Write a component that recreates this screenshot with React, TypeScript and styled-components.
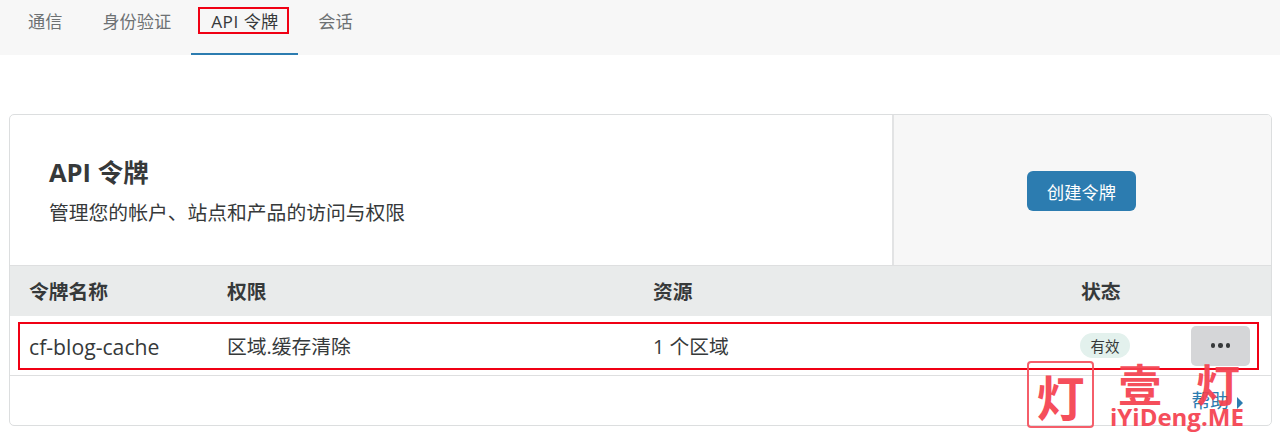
import React from "react";
import styled, { createGlobalStyle } from "styled-components";

const Global = createGlobalStyle`
  html, body { margin: 0; padding: 0; background: #fff; }
  body {
    width: 1280px; height: 433px; overflow: hidden; position: relative;
    font-family: "Open Sans", "Noto Sans CJK SC", sans-serif;
    color: #36393a;
  }
`;

const Nav = styled.nav`
  display: flex; height: 55px; padding-left: 8px; background: #f7f7f7; box-sizing: border-box;
`;
const Tab = styled.div<{ $active?: boolean }>`
  position: relative; display: flex; align-items: flex-start; padding: 11px 20px 0;
  box-sizing: border-box; height: 55px; line-height: 21px; font-size: 17.2px; white-space: pre;
  color: ${(p) => (p.$active ? "#36393a" : "#6d7173")};
  border-bottom: 2px solid ${(p) => (p.$active ? "#2c7cb0" : "transparent")};
`;
const Latin = styled.span`
  letter-spacing: .55px;
`;
const TabMark = styled.span`
  position: absolute; left: 7px; top: 7px; width: 91px; height: 27px;
  border: 2px solid #f00014; box-sizing: border-box;
`;
const Card = styled.section`
  margin: 59px 8px 0 9px; height: 312px; box-sizing: border-box;
  border: 1px solid #dcdedf; border-radius: 5px; overflow: hidden;
  display: flex; flex-direction: column;
`;
const Head = styled.header`
  display: flex; height: 150px; flex: none; border-bottom: 1px solid #dedfe0;
`;
const Intro = styled.div`
  width: 884px; flex: none; box-sizing: border-box; border-right: 2px solid #e2e3e4;
  padding: 39px 0 0 39px;
`;
const Title = styled.h2`
  margin: 0; font-size: 25.5px; font-weight: 700; line-height: 36px; color: #36393a;
`;
const Sub = styled.p`
  margin: 8px 0 0; font-size: 19.8px; line-height: 30px; color: #36393a;
`;
const Aside = styled.div`
  flex: 1; background: #f7f7f7; display: flex; align-items: center; justify-content: center;
  padding: 2px 2px 0 0;
`;
const Create = styled.button`
  width: 109px; height: 40px; border: 0; border-radius: 6px; background: #2c7cb0; color: #fff;
  font: 17.2px "Open Sans", "Noto Sans CJK SC", sans-serif; padding: 0;
`;
const Row = styled.div<{ $head?: boolean }>`
  display: grid; grid-template-columns: 198px 426px 428px 1fr; align-items: center;
  box-sizing: border-box; padding-left: 19px; flex: none;
  height: ${(p) => (p.$head ? "50px" : "60px")};
  padding-bottom: ${(p) => (p.$head ? "2px" : "0")};
  background: ${(p) => (p.$head ? "#e9ebeb" : "#fff")};
  font-size: 19.8px; font-weight: ${(p) => (p.$head ? 700 : 400)};
  border-bottom: ${(p) => (p.$head ? "0" : "1px solid #dedfe0")};
  position: relative;
`;
const TokenName = styled.span`
  font-size: 21.2px; padding-top: 2px;
`;
const Status = styled.div`
  display: flex; align-items: center; justify-content: space-between; padding-right: 21px; margin-left: -1px;
`;
const Badge = styled.span`
  width: 50px; height: 25px; border-radius: 13px; background: #e3f1ed;
  display: flex; align-items: center; justify-content: center; font-size: 14.5px; color: #36393a;
`;
const More = styled.button`
  width: 59px; height: 40px; border: 0; border-radius: 5px; background: #d5d6d8; padding: 0;
  display: flex; align-items: center; justify-content: center; gap: 3px;
`;
const Dot = styled.i`
  width: 4.5px; height: 4.5px; border-radius: 50%; background: #36393a;
`;
const RowMark = styled.span`
  position: absolute; left: 8px; top: 6px; width: 1241px; height: 48px;
  border: 2px solid #f00014; box-sizing: border-box; pointer-events: none;
`;
const Foot = styled.div`
  flex: 1; display: flex; justify-content: flex-end; align-items: flex-start;
  padding: 14px 28px 0 0; color: #2c7cb0; font-size: 18.8px; line-height: 22px; gap: 8px;
`;
const Arrow = styled.svg`
  width: 6px; height: 12px; margin-top: 7px;
`;
const Water = styled.div`
  position: absolute; left: 1027px; top: 361px; display: flex; gap: 16px; color: #f5414f; opacity: .93;
`;
const Stamp = styled.div`
  width: 67px; height: 67px; box-sizing: border-box; border: 2px solid #f5525f; border-radius: 4px;
  display: flex; align-items: center; justify-content: center;
  font: 700 48px/1 "Noto Sans CJK SC", sans-serif;
`;
const Brand = styled.div`
  display: flex; flex-direction: column; align-items: stretch; width: 136px;
`;
const Glyphs = styled.div`
  display: flex; justify-content: space-between; padding: 0 6px 0 8px;
  font: 700 44px/44px "Noto Sans CJK SC", sans-serif;
`;
const Domain = styled.div`
  font: 700 24px/24px "Open Sans", sans-serif; white-space: nowrap;
`;

export default function App() {
  return (
    <>
      <Global />
      <Nav>
        <Tab>通信</Tab>
        <Tab>身份验证</Tab>
        <Tab $active><Latin>API </Latin>令牌<TabMark /></Tab>
        <Tab>会话</Tab>
      </Nav>
      <Card>
        <Head>
          <Intro>
            <Title>API 令牌</Title>
            <Sub>管理您的帐户、站点和产品的访问与权限</Sub>
          </Intro>
          <Aside><Create>创建令牌</Create></Aside>
        </Head>
        <Row $head>
          <span>令牌名称</span><span>权限</span><span>资源</span><span>状态</span>
        </Row>
        <Row>
          <TokenName>cf-blog-cache</TokenName>
          <span>区域.缓存清除</span>
          <span>1 个区域</span>
          <Status>
            <Badge>有效</Badge>
            <More aria-label="更多"><Dot /><Dot /><Dot /></More>
          </Status>
          <RowMark />
        </Row>
        <Foot>
          <span>帮助</span>
          <Arrow viewBox="0 0 6 12"><path d="M0 0 L6 6 L0 12 Z" fill="#2c7cb0" /></Arrow>
        </Foot>
      </Card>
      <Water>
        <Stamp>灯</Stamp>
        <Brand>
          <Glyphs><span>壹</span><span>灯</span></Glyphs>
          <Domain>iYiDeng.ME</Domain>
        </Brand>
      </Water>
    </>
  );
}
